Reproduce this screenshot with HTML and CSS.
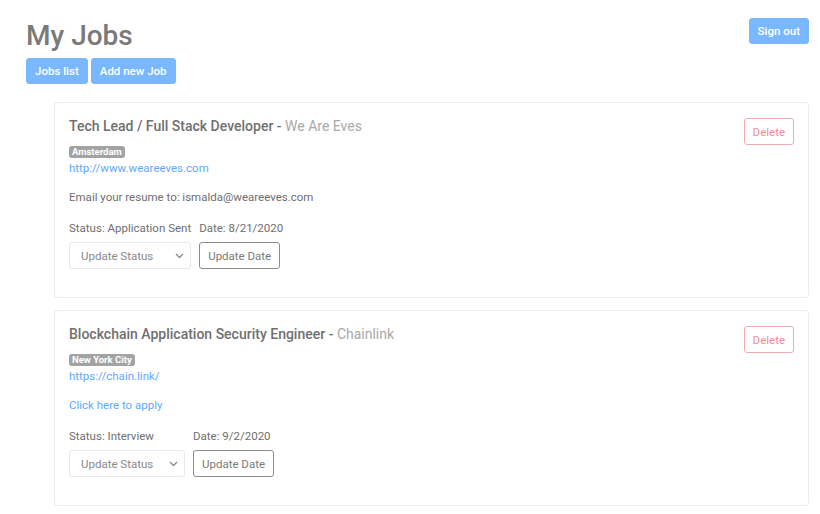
FILE: index.html
```html
<!DOCTYPE html>
<html>
<head>
<meta charset="utf-8">
<link rel="stylesheet" href="styles.css">
</head>
<body>
<div class="page">
  <header class="top">
    <div class="brand">
      <h1 class="title">My Jobs</h1>
      <nav class="tabs">
        <button class="btn-primary">Jobs list</button>
        <button class="btn-primary">Add new Job</button>
      </nav>
    </div>
    <button class="btn-primary signout">Sign out</button>
  </header>

  <main class="jobs">
    <section class="card">
      <div class="card-head">
        <h2 class="job-title">Tech Lead / Full Stack Developer - <span class="company">We Are Eves</span></h2>
        <button class="btn-delete">Delete</button>
      </div>
      <span class="badge">Amsterdam</span>
      <a class="link" href="#">http://www.weareeves.com</a>
      <p class="note">Email your resume to: ismalda@weareeves.com</p>
      <div class="status-row">
        <div class="col">
          <div class="label">Status: Application Sent</div>
          <div class="fake-select"><span>Update Status</span><svg width="9" height="6" viewBox="0 0 9 6"><path d="M1 1l3.5 3.5L8 1" fill="none" stroke="#8a8a8a" stroke-width="1.3"/></svg></div>
        </div>
        <div class="col">
          <div class="label">Date: 8/21/2020</div>
          <button class="btn-outline">Update Date</button>
        </div>
      </div>
    </section>

    <section class="card">
      <div class="card-head">
        <h2 class="job-title">Blockchain Application Security Engineer - <span class="company">Chainlink</span></h2>
        <button class="btn-delete">Delete</button>
      </div>
      <span class="badge">New York City</span>
      <a class="link" href="#">https://chain.link/</a>
      <a class="link note" href="#">Click here to apply</a>
      <div class="status-row">
        <div class="col">
          <div class="label">Status: Interview</div>
          <div class="fake-select"><span>Update Status</span><svg width="9" height="6" viewBox="0 0 9 6"><path d="M1 1l3.5 3.5L8 1" fill="none" stroke="#8a8a8a" stroke-width="1.3"/></svg></div>
        </div>
        <div class="col">
          <div class="label">Date: 9/2/2020</div>
          <button class="btn-outline">Update Date</button>
        </div>
      </div>
    </section>
  </main>
</div>
</body>
</html>
```

FILE: styles.css
```css
* { box-sizing: border-box; }
html, body { margin: 0; padding: 0; background: #fff; }
body {
  font-family: Roboto, "Liberation Sans", Arial, sans-serif;
  color: #6f6f6f;
  font-size: 11.5px;
}
.page { padding: 18px 11px 0 26px; }
.top { display: flex; justify-content: space-between; align-items: flex-start; }
.title {
  margin: 2px 0 0;
  font-size: 28px;
  font-weight: 500;
  line-height: 32px;
  color: #7a7a7a;
}
.tabs { display: flex; gap: 3px; margin-top: 6px; }
button { font-family: inherit; }
.btn-primary {
  background: #79b8ff;
  border: 1px solid #79b8ff;
  color: #fff;
  font-size: 11.5px;
  font-weight: 500;
  height: 26px;
  padding: 0 8px;
  border-radius: 3px;
}
.signout { height: 26px; padding: 0 8px; }
.jobs { margin: 18px 0 0 28px; display: flex; flex-direction: column; gap: 12px; }
.card {
  border: 1px solid #ececec;
  border-radius: 3px;
  padding: 14px 14px 28px;
  display: flex;
  flex-direction: column;
  align-items: flex-start;
}
.card-head { display: flex; justify-content: space-between; width: 100%; align-items: flex-start; }
.job-title {
  margin: 0;
  font-size: 14px;
  font-weight: 500;
  line-height: 18px;
  padding-top: 0;
  color: #707070;
}
.company { color: #a9a9a9; font-weight: 400; }
.btn-delete {
  background: #fff;
  border: 1px solid #f3aab2;
  color: #ee8d98;
  font-size: 11.5px;
  height: 27px;
  padding: 0 8px;
  border-radius: 3px;
  margin-top: 1px;
}
.badge {
  margin-top: 1px;
  background: #a3a3a3;
  color: #fff;
  font-size: 9.5px;
  font-weight: 700;
  padding: 1px 3px;
  border-radius: 3px;
  line-height: 10px;
}
.link { color: #5fa9ff; text-decoration: none; font-size: 11.5px; line-height: 14px; margin-top: 3px; }
.note { margin: 15px 0 0; font-size: 11.5px; line-height: 14px; }
.status-row { display: flex; gap: 8px; margin-top: 17px; }
.col { display: flex; flex-direction: column; align-items: stretch; }
.col:last-child { align-items: flex-start; }
.label { font-size: 11.5px; line-height: 14px; white-space: nowrap; }
.fake-select {
  margin-top: 7px;
  min-width: 116px;
  height: 27px;
  border: 1px solid #e9e9e9;
  border-radius: 3px;
  display: flex;
  align-items: center;
  justify-content: space-between;
  padding: 0 6px 0 11px;
  color: #8a8a8a;
  font-size: 11.5px;
}
.btn-outline {
  margin-top: 7px;
  background: #fff;
  border: 1px solid #8c8c8c;
  border-radius: 3px;
  color: #7a7a7a;
  height: 27px;
  padding: 0 8px;
  font-size: 11.5px;
}
```
